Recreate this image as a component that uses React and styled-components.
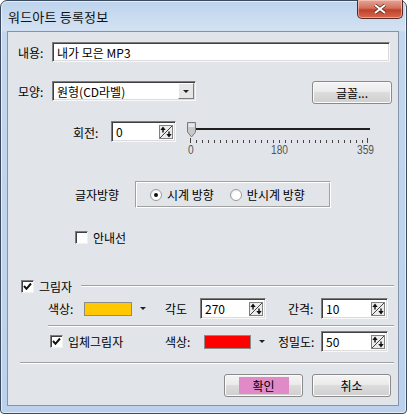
import React, { useState } from 'react'
import styled, { createGlobalStyle } from 'styled-components'

const Global = createGlobalStyle`
  html, body { margin: 0; padding: 0; background: #ffffff; }
  body { font-family: "Noto Sans CJK KR", "Noto Sans", sans-serif; font-size: 12px; color: #000; }
`

const Frame = styled.div`
  width: 407px;
  height: 414px;
  border: 1px solid #3b4a5e;
  border-radius: 7px 7px 4px 4px;
  background: linear-gradient(180deg, #bdd3ec 0px, #d3e2f3 29px, #c3d7ee 31px, #bcd2ec 100%);
  box-sizing: border-box;
  display: flex;
  flex-direction: column;
  box-shadow: inset 0 0 0 1px rgba(255,255,255,0.6);
`

const TitleBar = styled.div`
  height: 29px;
  display: flex;
  align-items: flex-start;
  justify-content: space-between;
  padding-left: 7px;
`

const Title = styled.div`
  font-size: 13px;
  line-height: 13px;
  margin-top: 9px;
  color: #111;
  letter-spacing: 0.2px;
`

const CloseBtn = styled.div`
  width: 46px;
  height: 19px;
  margin-right: 3px;
  margin-top: -1px;
  box-sizing: border-box;
  border: 1px solid #5a2a24;
  border-top: none;
  border-radius: 0 0 5px 5px;
  background: linear-gradient(180deg, #e7a597 0%, #d2705d 45%, #c0402a 55%, #d66a50 100%);
  display: flex;
  align-items: center;
  justify-content: center;
  box-shadow: inset 0 0 0 1px rgba(255,220,210,0.5);
`

const Client = styled.div`
  flex: 1;
  margin: 1px 7px 7px 6px;
  background: #e1e4e9;
  border: 1px solid #8594a8;
`

const Row = styled.div`
  display: flex;
  align-items: ${p => p.align || 'center'};
  margin-top: ${p => p.mt || 0}px;
  padding-left: ${p => p.pl || 0}px;
  height: ${p => p.h || 20}px;
`

const Label = styled.span`
  width: ${p => (p.w ? p.w + 'px' : 'auto')};
  flex: none;
  margin-right: ${p => p.mr || 0}px;
  margin-top: ${p => p.top || 0}px;
  white-space: nowrap;
  font-size: 12px;
`

const Field = styled.div`
  width: ${p => p.w}px;
  height: ${p => p.h || 20}px;
  flex: none;
  box-sizing: border-box;
  background: #fff;
  border: 1px solid;
  border-color: #7d7d7d #f8f8f8 #f8f8f8 #7d7d7d;
  box-shadow: inset 1px 1px 0 #3f3f3f, inset -1px -1px 0 #dcdcdc;
  display: flex;
  align-items: center;
  padding-left: 4px;
  font-size: 12px;
  margin-right: ${p => p.mr || 0}px;
`

const FieldText = styled.span`
  flex: 1;
`

const DropBtn = styled.div`
  width: 16px;
  height: 16px;
  margin-right: 1px;
  background: #e6e6e6;
  border: 1px solid;
  border-color: #fff #7d7d7d #7d7d7d #fff;
  box-sizing: border-box;
  display: flex;
  align-items: center;
  justify-content: center;
`

const Button = styled.div`
  width: ${p => p.w}px;
  height: 23px;
  flex: none;
  box-sizing: border-box;
  border: 1px solid #8a8a8a;
  border-radius: 3px;
  background: linear-gradient(180deg, #f4f4f4 0%, #ebebeb 45%, #dcdcdc 50%, #cfcfcf 100%);
  box-shadow: inset 0 0 0 1px #fbfbfb;
  display: flex;
  align-items: center;
  justify-content: center;
  font-size: 12px;
  margin-left: ${p => p.ml || 0}px;
  margin-right: ${p => p.mr || 0}px;
`

const Highlight = styled.span`
  width: 50px;
  height: 17px;
  background: #e08ac8;
  display: flex;
  align-items: center;
  justify-content: center;
`

const SliderBox = styled.div`
  position: relative;
  width: 192px;
  height: 38px;
  margin-left: 11px;
`

const Track = styled.div`
  position: absolute;
  left: 6px;
  width: 177px;
  top: 7px;
  height: 2px;
  background: #1f1f1f;
`

const Ticks = styled.div`
  position: absolute;
  left: 3px;
  width: 178px;
  top: 17px;
  height: 5px;
  background: repeating-linear-gradient(90deg, #444 0 1px, transparent 1px 5.93px);
  background-size: 178px 3px;
  background-repeat: no-repeat;
  background-position: 0 2px;
  &::before, &::after {
    content: '';
    position: absolute;
    top: 0;
    width: 1px;
    height: 5px;
    background: #444;
  }
  &::before { left: 0; }
  &::after { right: 0; }
`

const TickLabel = styled.span`
  position: absolute;
  top: 23px;
  left: ${p => p.x}px;
  font-family: "Liberation Sans", sans-serif;
  font-size: 12px;
  line-height: 13px;
  color: #555;
  transform: scaleX(0.85);
  transform-origin: left;
`

const Thumb = styled.svg`
  position: absolute;
  left: 0;
  top: 1px;
`

const Group = styled.div`
  display: flex;
  align-items: center;
  height: 27px;
  width: 196px;
  flex: none;
  box-sizing: border-box;
  border: 1px solid #a0a0a0;
  border-right-color: #fff;
  border-bottom-color: #fff;
  box-shadow: 1px 1px 0 #fff inset, -1px -1px 0 #a0a0a0 inset;
  padding-left: 14px;
`

const Radio = styled.span`
  width: 10px;
  height: 10px;
  flex: none;
  border-radius: 50%;
  background: radial-gradient(circle at 65% 65%, #fff 0 45%, #dcdcdc 100%);
  border: 1px solid #9a9a9a;
  margin-right: ${p => p.mr || 5}px;
  display: inline-flex;
  align-items: center;
  justify-content: center;
  &::after {
    content: '';
    width: 4px;
    height: 4px;
    border-radius: 50%;
    background: ${p => (p.on ? '#111' : 'transparent')};
  }
`

const Check = styled.span`
  width: 13px;
  height: 13px;
  flex: none;
  box-sizing: border-box;
  background: #fff;
  border: 1px solid;
  border-color: #7d7d7d #f0f0f0 #f0f0f0 #7d7d7d;
  box-shadow: inset 1px 1px 0 #404040;
  margin-right: ${p => p.mr || 5}px;
  display: inline-flex;
  align-items: center;
  justify-content: center;
`

const Separator = styled.div`
  height: 0;
  border-top: 1px solid #a0a0a0;
  border-bottom: 1px solid #fff;
  margin-left: ${p => p.ml || 0}px;
  margin-right: ${p => p.mr || 0}px;
  margin-top: ${p => p.mt || 0}px;
  flex: ${p => (p.grow ? 1 : 'none')};
`

const Swatch = styled.span`
  width: ${p => p.w}px;
  height: 14px;
  flex: none;
  box-sizing: border-box;
  background: ${p => p.color};
  border: 1px solid #8c8c8c;
`

const Caret = styled.span`
  width: 0;
  height: 0;
  flex: none;
  border-left: 3px solid transparent;
  border-right: 3px solid transparent;
  border-top: 3px solid #222;
  margin-left: ${p => p.ml || 0}px;
  margin-right: ${p => p.mr || 0}px;
`

const Spacer = styled.div`
  flex: 1;
`

function SpinIcon() {
  return (
    <svg width="14" height="14" viewBox="0 0 14 14" style={{ marginRight: 2, flex: 'none' }}>
      <rect x="0.5" y="0.5" width="13" height="13" fill="#ececec" stroke="#808080" />
      <line x1="1" y1="13" x2="13" y2="1" stroke="#444" strokeWidth="1" />
      <path d="M4 1.5 L1.3 5 H3.3 V7.5 H4.7 V5 H6.7 Z" fill="#111" />
      <path d="M10 12.5 L7.3 9 H9.3 V6.5 H10.7 V9 H12.7 Z" fill="#111" />
    </svg>
  )
}

function Spin({ w, value, mr }) {
  return (
    <Field w={w} h={21} mr={mr}>
      <FieldText>{value}</FieldText>
      <SpinIcon />
    </Field>
  )
}

function CheckMark() {
  return (
    <svg width="9" height="9" viewBox="0 0 9 9">
      <path d="M1 4 L3.5 6.8 L8 1.5" fill="none" stroke="#111" strokeWidth="2" />
    </svg>
  )
}

export default function App() {
  const [clockwise] = useState(true)
  return (
    <>
      <Global />
      <Frame>
        <TitleBar>
          <Title>워드아트 등록정보</Title>
          <CloseBtn>
            <svg width="14" height="10" viewBox="0 0 14 10">
              <path d="M2 1 L12 9 M12 1 L2 9" stroke="#5a1b12" strokeWidth="3.4" />
              <path d="M2 1 L12 9 M12 1 L2 9" stroke="#fff" strokeWidth="2.2" />
            </svg>
          </CloseBtn>
        </TitleBar>
        <Client>
          <Row mt={10} pl={10}>
            <Label w={34}>내용:</Label>
            <Field w={338}>내가 모은 MP3</Field>
          </Row>

          <Row mt={19} pl={10} h={23} align="flex-start">
            <Label w={34} top={2}>모양:</Label>
            <Field w={144}>
              <FieldText>원형(CD라벨)</FieldText>
              <DropBtn>
                <Caret />
              </DropBtn>
            </Field>
            <Spacer />
            <Button w={80} mr={6}>글꼴...</Button>
          </Row>

          <Row mt={17} pl={65} h={38} align="flex-start">
            <Label w={38} top={3}>회전:</Label>
            <Spin w={65} value="0" />
            <SliderBox>
              <Track />
              <Ticks />
              <Thumb width="10" height="16" viewBox="0 0 10 16">
                <path d="M0.5 0.5 H8.5 V10 L4.5 15 L0.5 10 Z" fill="#c9c9c9" stroke="#7a7a7a" />
                <path d="M1.5 1.5 H7.5 V5 H1.5 Z" fill="#e8e8e8" />
              </Thumb>
              <TickLabel x={1}>0</TickLabel>
              <TickLabel x={84}>180</TickLabel>
              <TickLabel x={170}>359</TickLabel>
            </SliderBox>
          </Row>

          <Row mt={22} pl={67} h={27}>
            <Label w={60}>글자방향</Label>
            <Group>
              <Radio on={clockwise} />
              <Label mr={16}>시계 방향</Label>
              <Radio on={!clockwise} />
              <Label>반시계 방향</Label>
            </Group>
          </Row>

          <Row mt={21} pl={67} h={16}>
            <Check />
            <Label>안내선</Label>
          </Row>

          <Row mt={33} pl={13} h={16}>
            <Check>
              <CheckMark />
            </Check>
            <Label w={42}>그림자</Label>
            <Separator grow mr={4} />
          </Row>

          <Row mt={4} pl={40} h={21}>
            <Label w={36}>색상:</Label>
            <Swatch w={48} color="#ffc800" />
            <Caret ml={8} mr={19} />
            <Label w={35}>각도</Label>
            <Spin w={66} value="270" mr={22} />
            <Label w={33}>간격:</Label>
            <Spin w={67} value="10" />
          </Row>

          <Separator ml={40} mr={4} mt={6} />

          <Row mt={4} pl={42} h={21}>
            <Check>
              <CheckMark />
            </Check>
            <Label w={97}>입체그림자</Label>
            <Label w={39}>색상:</Label>
            <Swatch w={47} color="#ff0000" />
            <Caret ml={8} mr={13} />
            <Label w={43}>정밀도:</Label>
            <Spin w={67} value="50" />
          </Row>

          <Separator ml={12} mr={4} mt={10} />

          <Row mt={10} h={23}>
            <Spacer />
            <Button w={79}>
              <Highlight>확인</Highlight>
            </Button>
            <Button w={79} ml={9} mr={7}>취소</Button>
          </Row>
        </Client>
      </Frame>
    </>
  )
}
